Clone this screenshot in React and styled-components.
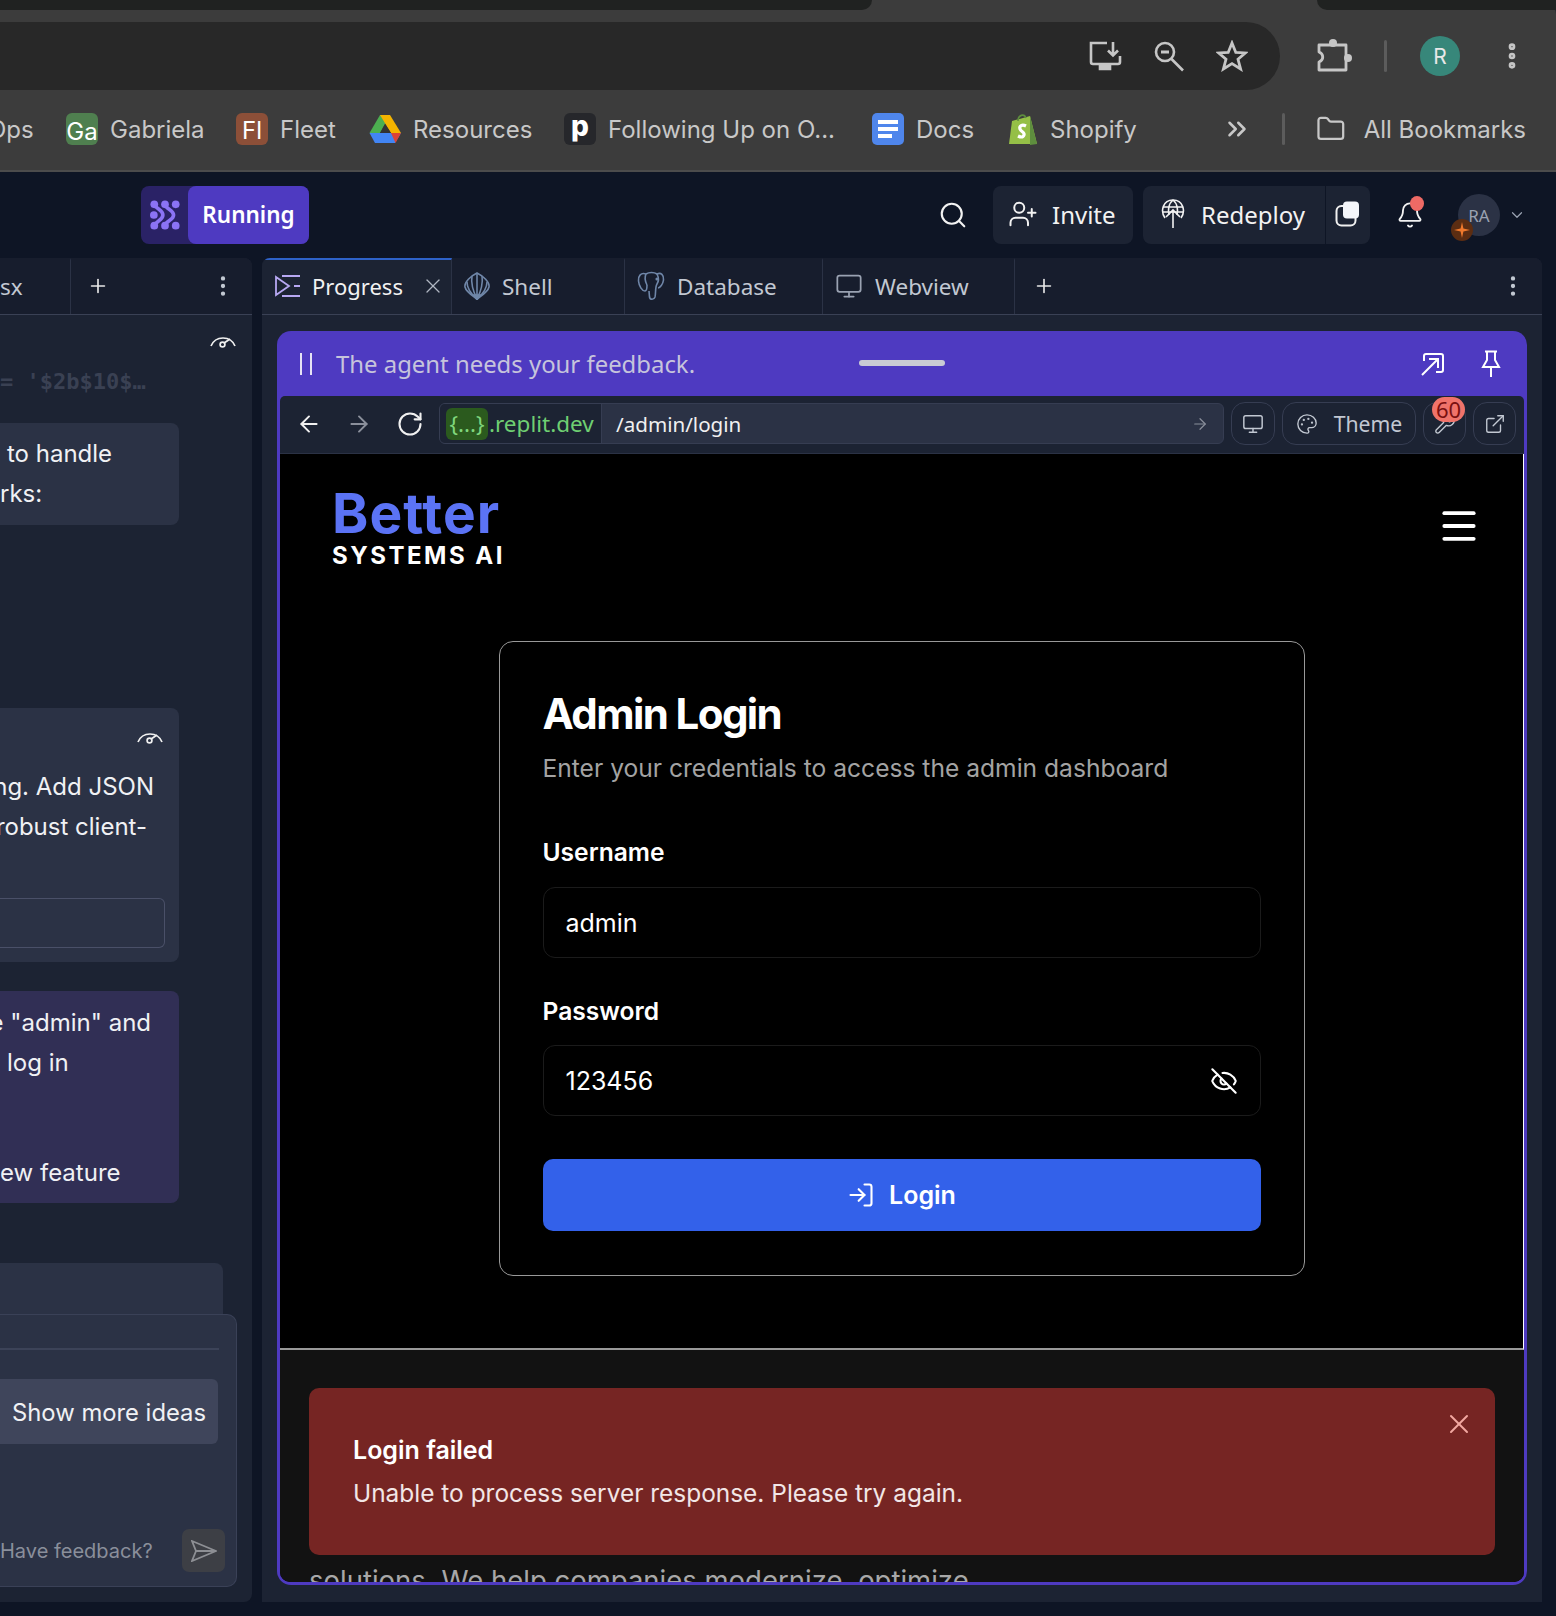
import React from 'react';
import styled, { createGlobalStyle } from 'styled-components';
import {
  ArrowLeft, ArrowRight, Bell, ChevronDown, ChevronsRight, EllipsisVertical, ExternalLink, EyeOff,
  Folder, LogIn, Menu, Monitor, Palette, Plus, RotateCw, Search, UserPlus, Wrench, X,
} from 'lucide-react';

const UI_FONT = `"Noto Sans", Roboto, sans-serif`;
const CHAT_FONT = `Inter, "Noto Sans", sans-serif`;

const Global = createGlobalStyle`
  html, body { margin: 0; padding: 0; background: #0e1525; }
  * { box-sizing: border-box; }
`;

const Page = styled.div`
  width: 1556px;
  height: 1616px;
  overflow: hidden;
  display: flex;
  flex-direction: column;
  background: #0e1525;
  font-family: ${CHAT_FONT};
`;

/* browser chrome */
const Chrome = styled.div`
  height: 172px;
  background: #3c3c3c;
  border-bottom: 2px solid #4c4c4c;
  border-top-right-radius: 14px;
  display: flex;
  flex-direction: column;
`;
const TabStrip = styled.div`
  height: 10px;
  display: flex;
  justify-content: space-between;
  background: #3c3c3c;
`;
const StripPiece = styled.div`
  width: ${p => p.$w}px;
  background: #202221;
  border-bottom-${p => p.$side}-radius: 10px;
`;
const AddressRow = styled.div`
  margin-top: 12px;
  height: 68px;
  display: flex;
  align-items: center;
`;
const Omnibox = styled.div`
  width: 1280px;
  height: 68px;
  background: #282828;
  border-radius: 0 34px 34px 0;
  display: flex;
  align-items: center;
  justify-content: flex-end;
  gap: 32px;
  padding-right: 32px;
  color: #c6c6c6;
`;
const ChromeTools = styled.div`
  flex: 1;
  display: flex;
  align-items: center;
  color: #c6c6c6;
  padding-left: 36px;
`;
const ChromeSep = styled.div`
  width: 3px;
  height: ${p => p.$h}px;
  background: #5c5c5c;
  border-radius: 2px;
  margin: 0 ${p => p.$mr}px 0 ${p => p.$ml}px;
`;
const ProfileDot = styled.div`
  width: 40px;
  height: 40px;
  border-radius: 50%;
  background: #37877a;
  color: #e8e8e8;
  font-size: 21px;
  display: flex;
  align-items: center;
  justify-content: center;
  margin-right: 36px;
`;
const BookmarkBar = styled.div`
  height: 78px;
  display: flex;
  align-items: center;
  font-size: 24px;
  color: #c8c8c8;
  white-space: nowrap;
  overflow: hidden;
`;
const Bookmark = styled.div`
  width: ${p => p.$w}px;
  flex: none;
  display: flex;
  align-items: center;
  gap: ${p => p.$gap || 12}px;
`;
const FavTile = styled.div`
  width: 32px;
  height: 32px;
  flex: none;
  border-radius: 6px;
  background: ${p => p.$bg};
  color: #fff;
  font-size: ${p => p.$size || 24}px;
  font-weight: ${p => p.$weight || 400};
  padding-top: ${p => p.$pt || 0}px;
  padding-bottom: ${p => p.$pb || 0}px;
  display: flex;
  align-items: center;
  justify-content: center;
  overflow: hidden;
`;
const ClippedLabel = styled.span`
  margin-left: -12px;
`;

/* replit top bar */
const TopBar = styled.div`
  height: 86px;
  flex: none;
  display: flex;
  align-items: flex-start;
  padding-top: 14px;
  font-family: ${UI_FONT};
`;
const RunPill = styled.div`
  margin-left: 141px;
  width: 168px;
  height: 58px;
  border-radius: 8px;
  background: #2a2266;
  display: flex;
  align-items: center;
`;
const RunLogo = styled.div`
  width: 47px;
  display: flex;
  justify-content: center;
`;
const RunLabel = styled.div`
  flex: 1;
  height: 58px;
  border-radius: 8px;
  background: #4e3ac1;
  color: #fff;
  font-size: 22.5px;
  font-weight: 600;
  padding-bottom: 2px;
  display: flex;
  align-items: center;
  justify-content: center;
`;
const TopActions = styled.div`
  margin-left: auto;
  height: 58px;
  display: flex;
  align-items: center;
  color: #f2f2f2;
`;
const SearchSlot = styled.div`
  width: 30px;
  margin-right: 25px;
  display: flex;
`;
const TopButton = styled.div`
  height: 58px;
  background: #1c2333;
  border-radius: ${p => p.$radius || '8px'};
  display: flex;
  align-items: center;
  justify-content: ${p => p.$center ? 'center' : 'flex-start'};
  gap: ${p => p.$gap || 16}px;
  width: ${p => p.$w}px;
  padding-left: ${p => p.$pl || 0}px;
  padding-bottom: 2px;
  margin-right: ${p => p.$mr || 0}px;
  font-size: 24px;
  border-left: ${p => p.$divided ? '1px solid #0e1525' : 'none'};
`;
const BellSlot = styled.div`
  position: relative;
  width: 30px;
  margin: 0 32px 0 26px;
  display: flex;
`;
const RedDot = styled.span`
  position: absolute;
  top: -5px;
  right: 2px;
  width: 14px;
  height: 15px;
  border-radius: 50%;
  background: #ee6a65;
`;
const UserAvatar = styled.div`
  position: relative;
  width: 42px;
  height: 42px;
  border-radius: 50%;
  background: #2b3245;
  color: #9aa2b2;
  font-size: 17px;
  display: flex;
  align-items: center;
  justify-content: center;
  margin-right: 8px;
`;
const SparkBadge = styled.span`
  position: absolute;
  left: -7px;
  bottom: -5px;
  width: 22px;
  height: 22px;
  border-radius: 50%;
  background: #5c2d12;
  display: flex;
  align-items: center;
  justify-content: center;
`;
const AccountCaret = styled.span`
  display: flex;
  margin-right: 30px;
  color: #9aa2b2;
`;

/* workspace */
const Workspace = styled.div`
  height: 1344px;
  flex: none;
  display: flex;
  gap: 10px;
  padding-right: 14px;
`;
const LeftPanel = styled.div`
  width: 252px;
  flex: none;
  background: #1c2333;
  overflow: hidden;
  border-radius: 0 8px 8px 0;
`;
const PanelTabs = styled.div`
  height: 57px;
  flex: none;
  background: #171d2d;
  border-bottom: 1px solid #3a4155;
  display: flex;
  align-items: stretch;
  color: #c2c8d2;
  font-family: ${UI_FONT};
  font-size: 22.5px;
`;
const EditorTab = styled.div`
  width: ${p => p.$w}px;
  flex: none;
  display: flex;
  align-items: center;
  gap: ${p => p.$active ? 10 : 12}px;
  padding-left: ${p => p.$pl ?? 12}px;
  padding-bottom: 2px;
  border-right: 1px solid #2b3245;
  background: ${p => p.$active ? '#1c2333' : 'transparent'};
  color: ${p => p.$active ? '#f2f2f2' : '#c2c8d2'};
  font-size: ${p => p.$active ? 22 : 22.5}px;
  border-top: 2px solid ${p => p.$active ? '#2e62c9' : 'transparent'};
`;
const TabClose = styled.span`
  margin-left: auto;
  margin-right: 6px;
  display: flex;
  color: #b0b6c2;
`;
const AddTab = styled.div`
  width: ${p => p.$w}px;
  display: flex;
  align-items: center;
  padding-left: ${p => p.$pl}px;
  color: #e8e8e8;
`;
const TabMenu = styled.div`
  margin-left: auto;
  margin-right: ${p => p.$mr}px;
  display: flex;
  align-items: center;
  color: #c2c8d2;
`;

const GaugeRow = styled.div`
  margin-top: 17px;
  height: 20px;
  display: flex;
  justify-content: flex-end;
  padding-right: 16px;
  color: #f0f0f0;
`;
const CodeLine = styled.div`
  margin-top: 20px;
  height: 20px;
  line-height: 20px;
  font-family: "DejaVu Sans Mono", monospace;
  font-size: 22px;
  font-weight: 700;
  color: #3a4153;
  white-space: pre;
`;
const ChatCard = styled.div`
  width: 179px;
  height: ${p => p.$h}px;
  margin-top: ${p => p.$mt}px;
  background: ${p => p.$bg || '#2b3245'};
  border-radius: 0 8px 8px 0;
  padding-top: ${p => p.$pt}px;
  color: #f0f1f4;
  font-size: 24px;
  overflow: hidden;
`;
const ChatLine = styled.div`
  height: 40px;
  line-height: 40px;
  white-space: nowrap;
  display: flex;
  justify-content: ${p => p.$right ? 'flex-end' : 'flex-start'};
  padding-left: ${p => p.$left || 0}px;
  padding-right: ${p => p.$pr || 0}px;
  margin-top: ${p => p.$mt || 0}px;
`;
const CardGauge = styled.div`
  height: 18px;
  display: flex;
  justify-content: flex-end;
  padding-right: 16px;
  margin-bottom: 21px;
  color: #f0f0f0;
`;
const CardInput = styled.div`
  margin: 51px 14px 0 0;
  height: 50px;
  border: 1px solid #4a5068;
  border-left: none;
  border-radius: 0 6px 6px 0;
`;
const BackCard = styled.div`
  width: 223px;
  height: 60px;
  margin-top: 60px;
  background: #2b3245;
  border-radius: 0 8px 0 0;
`;
const Composer = styled.div`
  width: 237px;
  height: 273px;
  margin-top: -9px;
  background: #2b3245;
  border: 1px solid #3a4157;
  border-left: none;
  border-radius: 0 10px 10px 0;
  padding-top: 33px;
`;
const ComposerRule = styled.div`
  width: 219px;
  height: 2px;
  background: #3c4358;
`;
const IdeasButton = styled.div`
  width: 218px;
  height: 65px;
  margin-top: 29px;
  background: #3f455b;
  border-radius: 0 6px 6px 0;
  color: #f0f1f4;
  font-size: 23.8px;
  display: flex;
  align-items: center;
  justify-content: flex-end;
  padding-right: 12px;
  padding-top: 1px;
  white-space: nowrap;
`;
const FeedbackRow = styled.div`
  margin-top: 85px;
  display: flex;
  align-items: center;
  padding-right: 11px;
  color: #8a8f9b;
  font-size: 20px;
  white-space: nowrap;
`;
const SendBox = styled.div`
  margin-left: auto;
  width: 43px;
  height: 43px;
  border-radius: 7px;
  background: #3d3f45;
  display: flex;
  align-items: center;
  justify-content: center;
`;

/* right side */
const RightPanel = styled.div`
  flex: 1;
  min-width: 0;
  display: flex;
  flex-direction: column;
  background: #1c2333;
  border-radius: 8px 8px 0 0;
  overflow: hidden;
`;
const RightBody = styled.div`
  flex: 1;
  min-height: 0;
  padding: 16px 15px 17px;
  display: flex;
`;
const Frame = styled.div`
  flex: 1;
  min-width: 0;
  display: flex;
  flex-direction: column;
  background: #4e3ac1;
  border-radius: 14px;
  padding: 0 3px 3px;
  overflow: hidden;
`;
const FeedbackBar = styled.div`
  position: relative;
  height: 65px;
  flex: none;
  display: flex;
  align-items: center;
  color: #c6c4dc;
  font-family: ${UI_FONT};
  font-size: 23.9px;
  padding-left: 20px;
`;
const PauseMark = styled.span`
  width: 12px;
  height: 22px;
  border-left: 2px solid #e6e2f5;
  border-right: 2px solid #e6e2f5;
  margin-right: 24px;
`;
const DragHandle = styled.span`
  position: absolute;
  left: 579px;
  top: 29px;
  width: 86px;
  height: 6px;
  border-radius: 3px;
  background: #c9cbd4;
`;
const BarActions = styled.div`
  margin-left: auto;
  display: flex;
  align-items: center;
  gap: 36px;
  padding-right: 23px;
  color: #fff;
`;
const Toolbar = styled.div`
  height: 58px;
  flex: none;
  background: #1c2333;
  border-bottom: 1px solid #2b3245;
  border-radius: 5px 5px 0 0;
  display: flex;
  align-items: center;
  padding-left: 16px;
  padding-right: 7px;
  padding-bottom: 2px;
  color: #f0f0f0;
  font-family: ${UI_FONT};
`;
const NavSlot = styled.div`
  width: ${p => p.$w}px;
  flex: none;
  display: flex;
  color: ${p => p.$dim ? '#8a8f9b' : '#f0f0f0'};
`;
const UrlBar = styled.div`
  width: 785px;
  height: 41px;
  flex: none;
  display: flex;
  border-radius: 6px;
  border: 1px solid #363d52;
  background: #2b3245;
  font-size: 22.5px;
  overflow: hidden;
`;
const UrlHost = styled.div`
  width: 162px;
  flex: none;
  display: flex;
  align-items: center;
  gap: 1px;
  padding-left: 6px;
  background: #1c2333;
  border-right: 1px solid #363d52;
  color: #6fcf72;
`;
const HostChip = styled.span`
  width: 42px;
  height: 32px;
  border-radius: 6px;
  background: #2b5a1e;
  color: #7fd67c;
  display: flex;
  align-items: center;
  justify-content: center;
`;
const UrlPath = styled.div`
  flex: 1;
  display: flex;
  align-items: center;
  padding: 0 14px;
  color: #f0f0f0;
  font-size: 20.6px;
`;
const UrlGo = styled.span`
  margin-left: auto;
  display: flex;
  color: #8a8f9b;
`;
const ToolButton = styled.div`
  position: relative;
  width: ${p => p.$w}px;
  height: 43px;
  flex: none;
  margin-left: 7px;
  border: 1px solid #363d52;
  border-radius: 14px;
  display: flex;
  align-items: center;
  justify-content: center;
  gap: 16px;
  color: #c2c8d2;
  font-size: 21.2px;
`;
const CountBadge = styled.span`
  position: absolute;
  top: -6px;
  right: 0;
  width: 33px;
  height: 25px;
  border-radius: 13px;
  background: #f0736a;
  color: #7a1010;
  font-size: 22px;
  line-height: 25px;
  text-align: center;
`;

/* previewed site */
const Preview = styled.div`
  flex: 1;
  min-height: 0;
  display: flex;
  flex-direction: column;
  background: #000;
  overflow: hidden;
  border-radius: 0 0 10px 10px;
`;
const SiteMain = styled.div`
  height: 896px;
  flex: none;
  background: #000;
  border-right: 1px solid #fff;
  border-bottom: 2px solid #999;
`;
const SiteHeader = styled.div`
  height: 187px;
  display: flex;
  justify-content: space-between;
  align-items: flex-start;
  padding: 32px 42px 0 52px;
`;
const Logo = styled.div`
  display: flex;
  flex-direction: column;
  align-items: flex-start;
  font-family: Inter, sans-serif;
  font-weight: 700;
`;
const LogoTop = styled.div`
  font-size: 55px;
  line-height: 54px;
  color: #5b73f5;
  letter-spacing: 1px;
`;
const LogoBottom = styled.div`
  margin-top: 3px;
  font-size: 24px;
  line-height: 26px;
  color: #fff;
  letter-spacing: 2.5px;
`;
const Hamburger = styled.div`
  margin-top: 18px;
  display: flex;
  color: #fff;
`;
const LoginCard = styled.div`
  width: 806px;
  height: 635px;
  margin: 0 auto;
  border: 1px solid #999;
  border-radius: 14px;
  padding: 47px 43px 0;
  font-family: Inter, sans-serif;
`;
const CardTitle = styled.h1`
  margin: 0;
  font-size: 42px;
  line-height: 50px;
  font-weight: 700;
  letter-spacing: -1.6px;
  color: #fff;
`;
const CardSub = styled.p`
  margin: 14px 0 0;
  font-size: 24.6px;
  line-height: 30px;
  color: #a3a3a3;
`;
const FieldLabel = styled.div`
  margin-top: ${p => p.$mt}px;
  font-size: 24.6px;
  line-height: 30px;
  font-weight: 600;
  color: #fff;
`;
const FieldBox = styled.div`
  margin-top: ${p => p.$mt}px;
  height: 71px;
  border: 1px solid #1b1b1b;
  border-radius: 12px;
  display: flex;
  align-items: center;
  justify-content: space-between;
  padding: 0 22px;
  color: #fff;
  font-size: 25px;
`;
const LoginButton = styled.div`
  margin-top: 43px;
  height: 72px;
  border-radius: 10px;
  background: #3361ea;
  color: #fff;
  font-size: 25px;
  font-weight: 600;
  display: flex;
  align-items: center;
  justify-content: center;
  gap: 14px;
`;
const SiteFooter = styled.div`
  flex: 1;
  min-height: 0;
  background: #121212;
  padding: 38px 29px 0 29px;
  overflow: hidden;
  font-family: Inter, sans-serif;
`;
const Toast = styled.div`
  position: relative;
  height: 167px;
  background: #762523;
  border-radius: 10px;
  padding: 47px 44px 0;
  color: #fff;
`;
const ToastTitle = styled.div`
  font-size: 25px;
  line-height: 30px;
  font-weight: 600;
`;
const ToastMessage = styled.div`
  margin-top: 13px;
  font-size: 24.45px;
  line-height: 30px;
  color: #f2e6e6;
`;
const ToastClose = styled.span`
  position: absolute;
  top: 20px;
  right: 20px;
  display: flex;
  color: #f2a8a0;
`;
const FooterText = styled.div`
  margin-top: 8px;
  font-size: 27.5px;
  line-height: 34px;
  color: #a8a8a8;
  white-space: nowrap;
`;

const AgentLogo = () => (
  <svg width="30" height="30" viewBox="0 0 28 28" fill="#8b73f5">
    <circle cx="4" cy="4" r="3.6" /><circle cx="14" cy="4" r="3.6" /><circle cx="24" cy="4" r="3.6" />
    <circle cx="4" cy="24" r="3.6" /><circle cx="14" cy="24" r="3.6" /><circle cx="24" cy="24" r="3.6" />
    <circle cx="3.6" cy="14" r="3.6" />
    <g fill="none" stroke="#8b73f5" strokeWidth="3.4" strokeLinecap="round">
      <path d="M4 4 C6 9 12 9 12 14 C12 19 6 19 4 24" />
      <path d="M14 4 C15 9 22 9 22 14 C22 19 15 19 14 24" />
    </g>
  </svg>
);

const InstallIcon = () => (
  <svg width="34" height="30" viewBox="0 0 34 30" fill="none" stroke="currentColor" strokeWidth="2.6">
    <path d="M19 2 H3 V21 a2 2 0 0 0 2 2 H30 a2 2 0 0 0 2 -2 V15" />
    <path d="M25 1 V14 M20 9.5 L25 14.5 L30 9.5" />
    <path d="M12 24 H22 V28 H12 Z" fill="currentColor" />
  </svg>
);

const ChromeZoomIcon = () => (
  <svg width="30" height="32" viewBox="0 0 30 32" fill="none" stroke="currentColor" strokeWidth="2.6">
    <circle cx="11" cy="12" r="9" />
    <path d="M17.5 19 L29 30.5" />
    <path d="M7 12 H15" strokeWidth="3" />
  </svg>
);

const ChromeStarIcon = () => (
  <svg width="32" height="32" viewBox="0 0 32 32" fill="none" stroke="currentColor" strokeWidth="2.8">
    <path d="M16 3 L19.8 12.4 L29.5 12.9 L22 19.3 L24.6 29 L16 23.6 L7.4 29 L10 19.3 L2.5 12.9 L12.2 12.4 Z" />
  </svg>
);

const ExtensionIcon = () => (
  <svg width="36" height="36" viewBox="0 0 36 36" fill="currentColor">
    <path d="M3 7 H30 V32 H3 V24 C8 22 8 16 3 14 Z" fill="none" stroke="currentColor" strokeWidth="2.8" strokeLinejoin="round" />
    <circle cx="17" cy="5" r="4" />
    <circle cx="32" cy="20" r="4" />
  </svg>
);

const DriveIcon = () => (
  <svg width="32" height="28" viewBox="0 0 32 28">
    <path d="M11 0 H21 L11 18 H0.5 Z" fill="#4caf50" />
    <path d="M11 0 H21 L32 18 H22 Z" fill="#f4b400" />
    <path d="M6 18 H32 L26 28 H6 L0.5 18 Z" fill="#4285f4" />
    <path d="M22 18 H32 L26.5 28 Z" fill="#db4437" />
    <path d="M11 18 L16 9 L22 18 Z" fill="#333" />
  </svg>
);

const DocsIcon = () => (
  <svg width="32" height="32" viewBox="0 0 32 32">
    <rect width="32" height="32" rx="5" fill="#4f86ec" />
    <path d="M6 7 H26 V11 H6 Z M6 14 H26 V18 H6 Z M6 21 H20 V25 H6 Z" fill="#fff" />
  </svg>
);

const ShopifyIcon = () => (
  <svg width="30" height="32" viewBox="0 0 30 32">
    <path d="M4 8 L22 3 L29 31 L1 31 Z" fill="#95bf47" />
    <path d="M22 3 L29 31 L22 32 Z" fill="#5e8e3e" />
    <path d="M10 8 C10 2 16 0 18 5" fill="none" stroke="#5e8e3e" strokeWidth="1.6" />
    <path d="M18 13 C14 11 11 13 12 16 C13 19 17 19 16 22 C15 25 12 24 10 23" fill="none" stroke="#fff" strokeWidth="3.2" />
  </svg>
);

const ProgressIcon = () => (
  <svg width="28" height="24" viewBox="0 0 28 24" fill="none" stroke="#b7a8f2" strokeWidth="1.8">
    <path d="M2 3 V21 L15 12 Z" />
    <path d="M8 2 H26 M20 12 H26 M8 22 H26" />
  </svg>
);

const ShellIcon = () => (
  <svg width="26" height="28" viewBox="0 0 26 28" fill="none" stroke="#6f86a8" strokeWidth="1.6">
    <path d="M13 1 C19 4 26 10 25 15 C24 20 17 24 13 27 C9 24 2 20 1 15 C0 10 7 4 13 1 Z" />
    <path d="M13 1 V27 M13 27 C9 19 7 10 8 4 M13 27 C17 19 19 10 18 4 M13 27 C7 22 3 17 3 10 M13 27 C19 22 23 17 23 10" />
    <path d="M9 23 L17 23 L13 27.5 Z" fill="#6f86a8" />
  </svg>
);

const ElephantIcon = () => (
  <svg width="28" height="30" viewBox="0 0 28 30" fill="none" stroke="#6f86a8" strokeWidth="1.6">
    <path d="M9 3 C4 1 1 5 1.5 10 C2 15 5 20 8 20 C10 20 10 17 10 14" />
    <path d="M9 3 C12 1 17 1 20 3 C24 1 27 4 26.5 9 C26 13 23 17 21 17" />
    <path d="M20 3 C22 7 22 10 20 13 C18 16 19 22 18 26 C17 29 13 29 12.5 26 L12 20" />
    <path d="M9 3 C7 7 8 10 10 14" />
    <circle cx="20" cy="8" r="0.8" />
  </svg>
);

const GaugeIcon = () => (
  <svg width="26" height="16" viewBox="0 0 26 16" fill="none" stroke="currentColor" strokeWidth="1.7">
    <path d="M1 14 A13 13 0 0 1 25 14" />
    <circle cx="12.5" cy="12.5" r="2.4" />
    <path d="M14.5 10.8 L20 7" />
  </svg>
);

const RedeployIcon = () => (
  <svg width="24" height="30" viewBox="0 0 24 30" fill="none" stroke="currentColor" strokeWidth="1.6">
    <path d="M4 19 C-1 12 2 1 12 1 C22 1 25 12 20 19" />
    <path d="M12 1 C7 5 7 12 8 16 M12 1 C17 5 17 12 16 16 M2 8 H22 M1.5 13 H22.5" />
    <path d="M12 29 V11 M5 18 L12 11 L19 18" />
  </svg>
);

const CopiesIcon = () => (
  <svg width="26" height="26" viewBox="0 0 26 26">
    <rect x="1.5" y="5" width="19" height="19.5" rx="5" fill="none" stroke="#f0f0f0" strokeWidth="2" />
    <rect x="8" y="0.5" width="16" height="17" rx="4" fill="#f4f6fa" />
  </svg>
);

const Spark = () => (
  <svg width="16" height="16" viewBox="0 0 16 16" fill="#f0792c">
    <path d="M8 0 L9.4 6.6 L16 8 L9.4 9.4 L8 16 L6.6 9.4 L0 8 L6.6 6.6 Z" />
  </svg>
);

const ExpandIcon = () => (
  <svg width="24" height="24" viewBox="0 0 24 24" fill="none" stroke="currentColor" strokeWidth="2">
    <path d="M3 9 V4 a2 2 0 0 1 2 -2 H20 a2 2 0 0 1 2 2 V18 a2 2 0 0 1 -2 2 H15" />
    <path d="M1 23 L17 7 M8 7 H17 V16" />
  </svg>
);

const PushPinIcon = () => (
  <svg width="20" height="28" viewBox="0 0 20 28" fill="none" stroke="currentColor" strokeWidth="2">
    <path d="M4 1.5 H16 M6 1.5 V10 L2 17 H18 L14 10 V1.5 M10 17 V27" />
  </svg>
);

const SendIcon = () => (
  <svg width="26" height="22" viewBox="0 0 26 22" fill="none" stroke="#8d8f94" strokeWidth="1.8">
    <path d="M1 1 L25 11 L1 21 L5 11 Z M5 11 H25" />
  </svg>
);

const App = () => (
  <Page>
    <Global />
    <Chrome>
      <TabStrip>
        <StripPiece $w={872} $side="right" />
        <StripPiece $w={239} $side="left" />
      </TabStrip>
      <AddressRow>
        <Omnibox>
          <InstallIcon />
          <ChromeZoomIcon />
          <ChromeStarIcon />
        </Omnibox>
        <ChromeTools>
          <ExtensionIcon />
          <ChromeSep $h={32} $ml={32} $mr={33} />
          <ProfileDot>R</ProfileDot>
          <EllipsisVertical size={32} strokeWidth={3} />
        </ChromeTools>
      </AddressRow>
      <BookmarkBar>
        <Bookmark $w={66}><ClippedLabel>Ops</ClippedLabel></Bookmark>
        <Bookmark $w={170}><FavTile $bg="#4f7f4f" $pt={5}>Ga</FavTile>Gabriela</Bookmark>
        <Bookmark $w={133}><FavTile $bg="#8c4f38" $pt={3}>Fl</FavTile>Fleet</Bookmark>
        <Bookmark $w={195}><DriveIcon />Resources</Bookmark>
        <Bookmark $w={308}><FavTile $bg="#26272b" $weight={800} $size={28} $pb={7}>p</FavTile>Following Up on O...</Bookmark>
        <Bookmark $w={136}><DocsIcon />Docs</Bookmark>
        <Bookmark $w={214}><ShopifyIcon />Shopify</Bookmark>
        <Bookmark $w={60}><ChevronsRight size={30} strokeWidth={2} /></Bookmark>
        <ChromeSep $h={32} $ml={0} $mr={31} />
        <Bookmark $w={210} $gap={18}><Folder size={34} strokeWidth={1.8} />All Bookmarks</Bookmark>
      </BookmarkBar>
    </Chrome>

    <TopBar>
      <RunPill>
        <RunLogo><AgentLogo /></RunLogo>
        <RunLabel>Running</RunLabel>
      </RunPill>
      <TopActions>
        <SearchSlot><Search size={30} strokeWidth={1.7} /></SearchSlot>
        <TopButton $w={140} $pl={15} $mr={10} $gap={14}><UserPlus size={30} strokeWidth={1.6} />Invite</TopButton>
        <TopButton $w={182} $pl={18} $radius="8px 0 0 8px"><RedeployIcon />Redeploy</TopButton>
        <TopButton $w={45} $center $divided $radius="0 8px 8px 0"><CopiesIcon /></TopButton>
        <BellSlot>
          <Bell size={28} strokeWidth={1.6} />
          <RedDot />
        </BellSlot>
        <UserAvatar>
          RA
          <SparkBadge><Spark /></SparkBadge>
        </UserAvatar>
        <AccountCaret><ChevronDown size={18} strokeWidth={1.6} /></AccountCaret>
      </TopActions>
    </TopBar>

    <Workspace>
      <LeftPanel>
        <PanelTabs>
          <EditorTab $w={71} $pl={0}>sx</EditorTab>
          <AddTab $w={60} $pl={16}><Plus size={22} strokeWidth={1.8} /></AddTab>
          <TabMenu $mr={16}><EllipsisVertical size={26} strokeWidth={2} /></TabMenu>
        </PanelTabs>
        <GaugeRow><GaugeIcon /></GaugeRow>
        <CodeLine>{"= '$2b$10$…"}</CodeLine>
        <ChatCard $h={102} $mt={31} $pt={11}>
          <ChatLine $left={7}>to handle</ChatLine>
          <ChatLine>rks:</ChatLine>
        </ChatCard>
        <ChatCard $h={254} $mt={183} $pt={20}>
          <CardGauge><GaugeIcon /></CardGauge>
          <ChatLine $right $pr={25}>ng. Add JSON</ChatLine>
          <ChatLine $right $pr={32}>robust client-</ChatLine>
          <CardInput />
        </ChatCard>
        <ChatCard $h={212} $mt={29} $pt={12} $bg="#312f55">
          <ChatLine $right $pr={28}>e "admin" and</ChatLine>
          <ChatLine $left={7}>log in</ChatLine>
          <ChatLine $mt={70}>ew feature</ChatLine>
        </ChatCard>
        <BackCard />
        <Composer>
          <ComposerRule />
          <IdeasButton>Show more ideas</IdeasButton>
          <FeedbackRow>
            Have feedback?
            <SendBox><SendIcon /></SendBox>
          </FeedbackRow>
        </Composer>
      </LeftPanel>

      <RightPanel>
        <PanelTabs>
          <EditorTab $w={190} $active>
            <ProgressIcon />Progress
            <TabClose><X size={24} strokeWidth={1.3} /></TabClose>
          </EditorTab>
          <EditorTab $w={173}><ShellIcon />Shell</EditorTab>
          <EditorTab $w={198}><ElephantIcon />Database</EditorTab>
          <EditorTab $w={192}><Monitor size={28} strokeWidth={1.5} color="#9aa2b2" />Webview</EditorTab>
          <AddTab $w={60} $pl={18}><Plus size={22} strokeWidth={1.8} /></AddTab>
          <TabMenu $mr={16}><EllipsisVertical size={26} strokeWidth={2} /></TabMenu>
        </PanelTabs>
        <RightBody>
          <Frame>
            <FeedbackBar>
              <PauseMark />
              The agent needs your feedback.
              <DragHandle />
              <BarActions>
                <ExpandIcon />
                <PushPinIcon />
              </BarActions>
            </FeedbackBar>
            <Toolbar>
              <NavSlot $w={50}><ArrowLeft size={26} strokeWidth={1.8} /></NavSlot>
              <NavSlot $w={50} $dim><ArrowRight size={26} strokeWidth={1.8} /></NavSlot>
              <NavSlot $w={43}><RotateCw size={28} strokeWidth={1.8} /></NavSlot>
              <UrlBar>
                <UrlHost><HostChip>{'{...}'}</HostChip>.replit.dev</UrlHost>
                <UrlPath>
                  /admin/login
                  <UrlGo><ArrowRight size={18} strokeWidth={1.6} /></UrlGo>
                </UrlPath>
              </UrlBar>
              <ToolButton $w={44}><Monitor size={22} strokeWidth={1.6} /></ToolButton>
              <ToolButton $w={134}><Palette size={22} strokeWidth={1.5} />Theme</ToolButton>
              <ToolButton $w={43}>
                <Wrench size={22} strokeWidth={1.5} />
                <CountBadge>60</CountBadge>
              </ToolButton>
              <ToolButton $w={43}><ExternalLink size={22} strokeWidth={1.5} /></ToolButton>
            </Toolbar>
            <Preview>
              <SiteMain>
                <SiteHeader>
                  <Logo>
                    <LogoTop>Better</LogoTop>
                    <LogoBottom>SYSTEMS AI</LogoBottom>
                  </Logo>
                  <Hamburger><Menu size={44} strokeWidth={2.1} /></Hamburger>
                </SiteHeader>
                <LoginCard>
                  <CardTitle>Admin Login</CardTitle>
                  <CardSub>Enter your credentials to access the admin dashboard</CardSub>
                  <FieldLabel $mt={54}>Username</FieldLabel>
                  <FieldBox $mt={20}>admin</FieldBox>
                  <FieldLabel $mt={38}>Password</FieldLabel>
                  <FieldBox $mt={19}>123456<EyeOff size={28} strokeWidth={1.8} /></FieldBox>
                  <LoginButton><LogIn size={28} strokeWidth={1.8} />Login</LoginButton>
                </LoginCard>
              </SiteMain>
              <SiteFooter>
                <Toast>
                  <ToastTitle>Login failed</ToastTitle>
                  <ToastMessage>Unable to process server response. Please try again.</ToastMessage>
                  <ToastClose><X size={32} strokeWidth={1.5} /></ToastClose>
                </Toast>
                <FooterText>solutions. We help companies modernize, optimize</FooterText>
              </SiteFooter>
            </Preview>
          </Frame>
        </RightBody>
      </RightPanel>
    </Workspace>
  </Page>
);

export default App;
